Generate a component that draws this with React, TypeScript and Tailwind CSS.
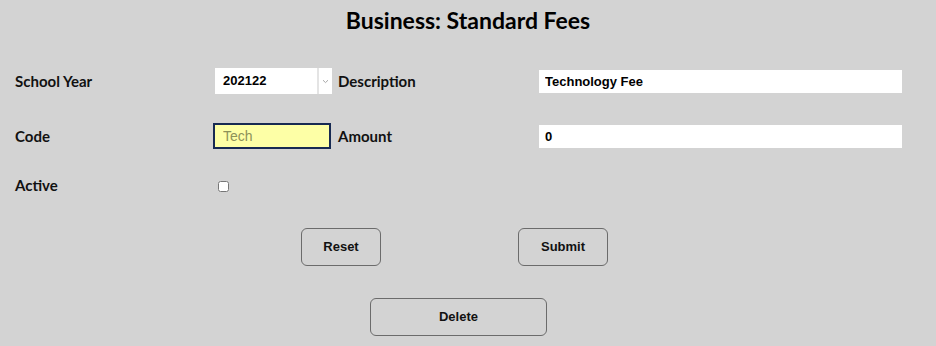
import React from 'react';

const labelCls = "font-['Lato',sans-serif] font-bold text-[15px] text-[#111]";
const inputCls = "h-[23px] bg-white px-[6px] font-['Liberation_Sans',Arial,sans-serif] font-bold text-[13px] text-black outline-none";

const Btn: React.FC<{ label: string; w: string }> = ({ label, w }) => (
  <button
    type="button"
    className={`${w} h-[38px] rounded-[6px] border border-[#6b6b6b] bg-transparent font-['Liberation_Sans',Arial,sans-serif] font-bold text-[13px] text-[#111]`}
  >
    {label}
  </button>
);

export default function App() {
  return (
    <div className="w-[936px] h-[346px] bg-[#d3d3d3] overflow-hidden">
      {/* Title */}
      <h1 className="pt-[7px] text-center font-['Lato',sans-serif] font-bold text-[23px] leading-[26px] text-black">
        Business: Standard Fees
      </h1>

      {/* Form grid */}
      <div className="mt-[35px] pl-[15px] grid grid-cols-[198px_125px_201px_363px]">
        {/* Row 1 */}
        <div className="h-[26px] flex items-center">
          <span className={labelCls}>School Year</span>
        </div>
        <div className="h-[26px] flex">
          <div className="w-[117px] h-[26px] ml-[2px] bg-white flex">
            <select className="flex-1 appearance-none bg-transparent pl-[8px] font-['Liberation_Sans',Arial,sans-serif] font-bold text-[13px] text-black outline-none">
              <option>202122</option>
            </select>
            <div className="w-[15px] border-l-2 border-[#e4e4e4] flex items-center justify-center">
              <svg width="7" height="5" viewBox="0 0 7 5" fill="none">
                <path d="M1 1.2 L3.5 3.6 L6 1.2" stroke="#a8a8a8" strokeWidth="1" />
              </svg>
            </div>
          </div>
        </div>
        <div className="h-[26px] flex items-center">
          <span className={labelCls}>Description</span>
        </div>
        <div className="h-[26px] flex items-center">
          <input className={`${inputCls} w-[363px]`} defaultValue="Technology Fee" />
        </div>

        {/* Row 2 */}
        <div className="h-[26px] mt-[29px] flex items-center">
          <span className={labelCls}>Code</span>
        </div>
        <div className="h-[26px] mt-[29px]">
          <input
            className="w-[118px] h-[26px] bg-[#fdffa6] border-2 border-[#172a52] px-[8px] font-['Liberation_Sans',Arial,sans-serif] text-[14px] text-black placeholder:text-[#8d9259] outline-none"
            placeholder="Tech"
          />
        </div>
        <div className="h-[26px] mt-[29px] flex items-center">
          <span className={labelCls}>Amount</span>
        </div>
        <div className="h-[26px] mt-[29px] flex items-center">
          <input className={`${inputCls} w-[363px]`} defaultValue="0" />
        </div>

        {/* Row 3 */}
        <div className="h-[26px] mt-[23px] flex items-center">
          <span className={labelCls}>Active</span>
        </div>
        <div className="h-[26px] mt-[23px] flex items-center">
          <input type="checkbox" className="ml-[5px] w-[11px] h-[11px] mt-[2px]" />
        </div>
      </div>

      {/* Buttons */}
      <div className="mt-[30px] flex">
        <div className="ml-[301px]">
          <Btn label="Reset" w="w-[80px]" />
        </div>
        <div className="ml-[137px]">
          <Btn label="Submit" w="w-[90px]" />
        </div>
      </div>
      <div className="mt-[32px] pl-[370px]">
        <Btn label="Delete" w="w-[177px]" />
      </div>
    </div>
  );
}
